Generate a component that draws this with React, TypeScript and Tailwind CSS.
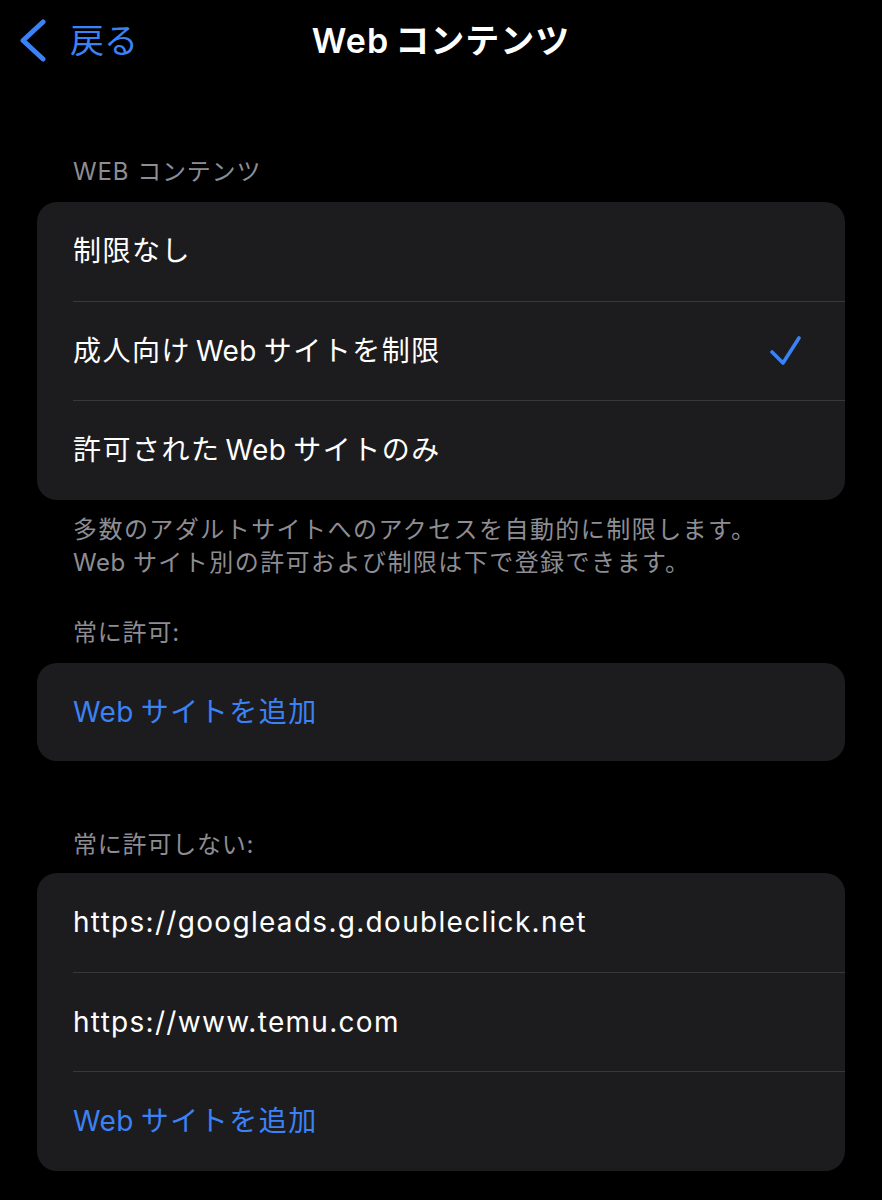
import React from "react";

const BLUE = "text-[#3b82f6]";

function Web({ before = false }: { before?: boolean }) {
  return <span className={`${before ? "ml-[5px] " : ""}mr-[7px] tracking-[0.4px]`}>Web</span>;
}

function Divider() {
  return <div className="ml-[36px] h-px bg-[#38383a]" />;
}

function Row({ children, right }: { children: React.ReactNode; right?: React.ReactNode }) {
  return (
    <div className="flex h-[98.5px] items-center justify-between pl-[36px] pr-[44px]">
      <div className="text-[28px] leading-none tracking-[1.5px]">{children}</div>
      {right}
    </div>
  );
}

function Check() {
  return (
    <svg width="32" height="32" viewBox="0 0 32 32" fill="none">
      <path d="M3 17 L14 28 L30 3" stroke="#3b82f6" strokeWidth="3.6" strokeLinecap="round" strokeLinejoin="round" />
    </svg>
  );
}

export default function App() {
  return (
    <div className="min-h-[1200px] w-full bg-black text-white font-['Inter','Noto_Sans_CJK_JP',sans-serif]">
      {/* Nav */}
      <div className="grid h-[82px] grid-cols-[1fr_auto_1fr] items-center px-[16px]">
        <div className={`flex items-center ${BLUE}`}>
          <svg width="32" height="44" viewBox="0 0 32 44" fill="none">
            <path d="M27 3 L7 21.5 L27 40" stroke="#3b82f6" strokeWidth="5" strokeLinecap="round" strokeLinejoin="round" />
          </svg>
          <span className="ml-[22px] text-[34px] leading-none">戻る</span>
        </div>
        <div className="text-[34px] font-semibold leading-none tracking-[1px]">
          <span className="mr-[6px]">Web</span>コンテンツ
        </div>
        <div />
      </div>

      <div className="px-[37px]">
        {/* Section 1 */}
        <div className="mt-[74px] pl-[36px] text-[24px] leading-[32px] tracking-[0.8px] text-[#8d8d93]">
          <span className="mr-[8px]">WEB</span>コンテンツ
        </div>
        <div className="mt-[14px] overflow-hidden rounded-[20px] bg-[#1c1c1e]">
          <Row>制限なし</Row>
          <Divider />
          <Row right={<Check />}>
            成人向け<Web before />サイトを制限
          </Row>
          <Divider />
          <Row>
            許可された<Web before />サイトのみ
          </Row>
        </div>
        <div className="mt-[13px] pl-[36px] text-[24px] leading-[33px] tracking-[1.45px] text-[#8d8d93]">
          <div>多数のアダルトサイトへのアクセスを自動的に制限します。</div>
          <div>
            <span className="mr-[7px] tracking-[0.6px]">Web</span>サイト別の許可および制限は下で登録できます。
          </div>
        </div>

        {/* Section 2 */}
        <div className="mt-[38px] pl-[36px] text-[24px] leading-[32px] tracking-[0.8px] text-[#8d8d93]">常に許可:</div>
        <div className="mt-[14px] overflow-hidden rounded-[20px] bg-[#1c1c1e]">
          <Row>
            <span className={BLUE}>
              <Web />サイトを追加
            </span>
          </Row>
        </div>

        {/* Section 3 */}
        <div className="mt-[68px] pl-[36px] text-[24px] leading-[32px] tracking-[0.8px] text-[#8d8d93]">常に許可しない:</div>
        <div className="mt-[12px] overflow-hidden rounded-[20px] bg-[#1c1c1e]">
          <Row>
            <span className="tracking-[1.3px]">https://googleads.g.doubleclick.net</span>
          </Row>
          <Divider />
          <Row>
            <span className="tracking-[1.3px]">https://www.temu.com</span>
          </Row>
          <Divider />
          <Row>
            <span className={BLUE}>
              <Web />サイトを追加
            </span>
          </Row>
        </div>
      </div>
    </div>
  );
}
